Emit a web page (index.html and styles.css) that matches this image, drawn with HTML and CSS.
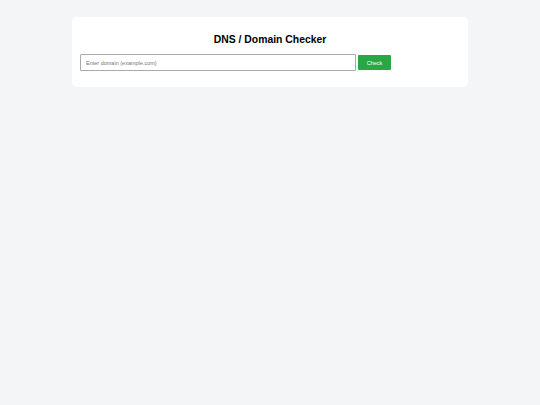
FILE: index.html
```html
<!DOCTYPE html>
<html>
<head>
<meta charset="utf-8">
<link rel="stylesheet" href="styles.css">
</head>
<body>
<div class="card">
  <h1 class="title">DNS / Domain Checker</h1>
  <div class="row">
    <input class="domain" type="text" placeholder="Enter domain (example.com)">
    <button class="check">Check</button>
  </div>
</div>
</body>
</html>
```
FILE: styles.css
```css
html, body {
  margin: 0;
  padding: 0;
  background: #f4f5f7;
  font-family: "Liberation Sans", Arial, sans-serif;
}
body {
  padding-top: 17px;
}
.card {
  width: 396px;
  margin: 0 auto;
  background: #ffffff;
  border-radius: 5px;
  box-sizing: border-box;
  padding: 16px 8px 16px 8px;
}
.title {
  margin: 0 0 7px 0;
  text-align: center;
  font-size: 10.4px;
  font-weight: bold;
  color: #000;
  line-height: 14px;
}
.row {
  display: flex;
  align-items: center;
  gap: 2px;
}
.domain {
  width: 276px;
  height: 17px;
  box-sizing: border-box;
  border: 1px solid #aaa;
  border-radius: 1px;
  padding: 0 5px;
  font-size: 5.5px;
  font-family: "Liberation Sans", Arial, sans-serif;
  outline: none;
}
.domain::placeholder {
  color: #777;
}
.check {
  width: 33px;
  height: 15px;
  background: #28a745;
  color: #fff;
  border: none;
  border-radius: 1px;
  font-size: 5.5px;
  font-family: "Liberation Sans", Arial, sans-serif;
  padding: 0;
}
```
